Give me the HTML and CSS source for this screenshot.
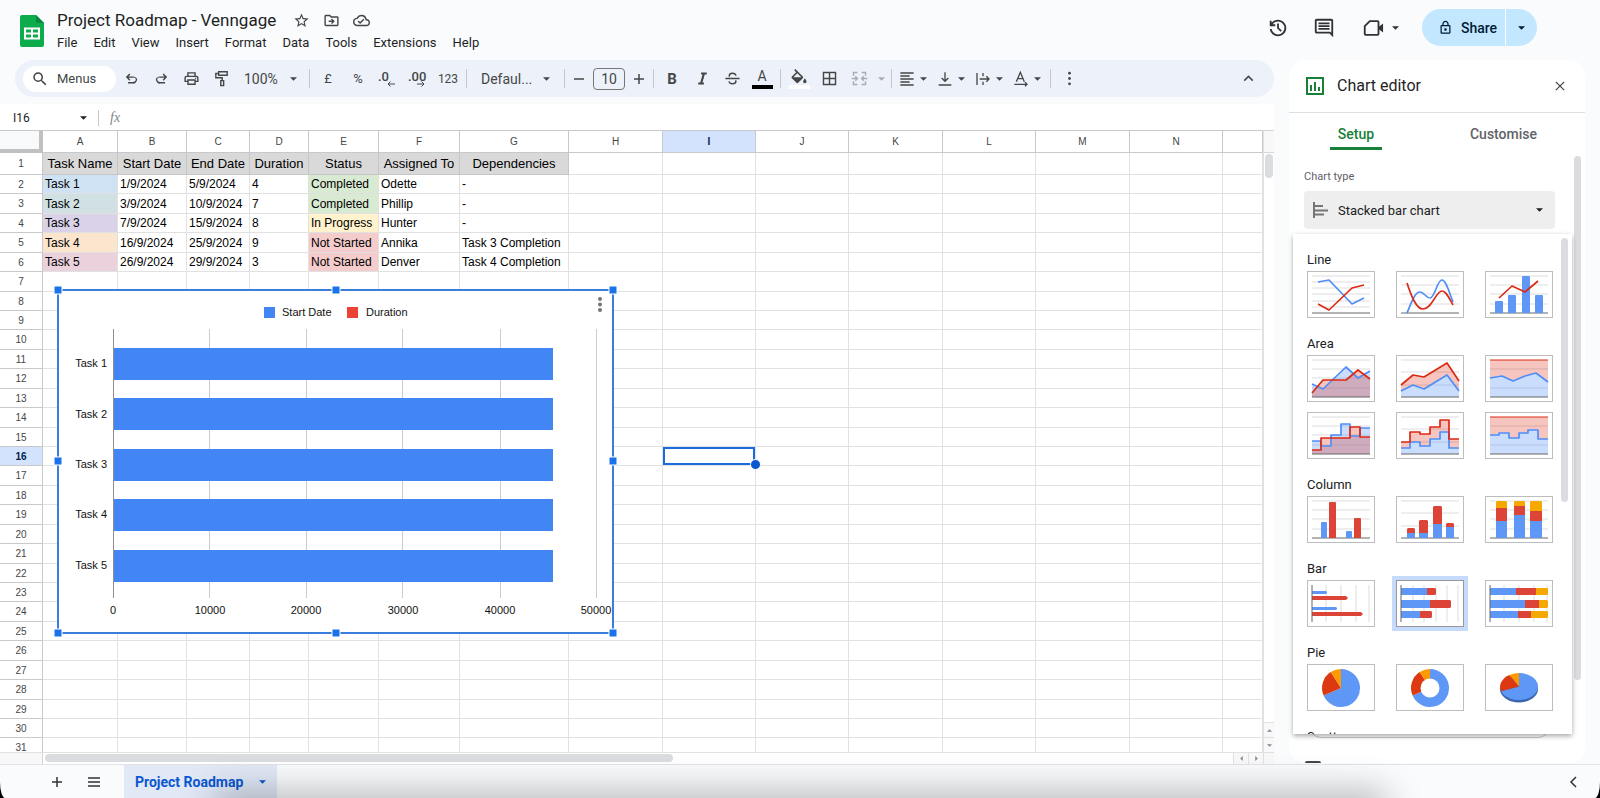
FILE: index.html
```html
<!DOCTYPE html>
<html lang="en">
<head>
<meta charset="utf-8">
<title>Project Roadmap - Venngage</title>
<link rel="stylesheet" href="styles.css">
</head>
<body>
<svg class="defs" aria-hidden="true">
  <symbol id="caret" viewBox="0 0 8 4"><path d="M0 0h8L4 4z"/></symbol>
  <symbol id="undo" viewBox="0 0 24 24"><path d="M7 19v-2h7.1q1.575 0 2.738-1T18 13.500t-1.163-2.500T14.100 11H7.800l2.600 2.600L9 15 4 10l5-5 1.400 1.400L7.800 9h6.300q2.425 0 4.163 1.575T20 13.500t-1.737 3.925T14.100 19z"/></symbol>
</svg>
<div class="app">
  <header class="top">
    <svg class="logo" viewBox="0 0 24 32"><path fill="#0cab4c" d="M2 0h14l8 8v22a2 2 0 0 1-2 2H2a2 2 0 0 1-2-2V2a2 2 0 0 1 2-2z"/><path fill="#078a3b" d="M16 0l8 8h-6a2 2 0 0 1-2-2z"/><path fill="#fff" fill-rule="evenodd" d="M4 12.500h16v12H4zM6 14.500v3h5v-3zm7 0v3h5v-3zm-7 5v3h5v-3zm7 0v3h5v-3z"/></svg>
    <div class="doc">
      <div class="title-row">
        <h1 class="title">Project Roadmap - Venngage</h1>
        <button class="mini" aria-label="Star"><svg viewBox="0 0 24 24"><path d="M22 9.240l-7.190-.62L12 2 9.190 8.630 2 9.240l5.460 4.730L5.820 21 12 17.270 18.180 21l-1.630-7.030L22 9.240zM12 15.400l-3.760 2.270 1-4.280-3.320-2.880 4.380-.38L12 6.100l1.710 4.040 4.380.38-3.320 2.880 1 4.280L12 15.400z"/></svg></button>
        <button class="mini" aria-label="Move"><svg viewBox="0 0 24 24"><path d="M20 6h-8l-2-2H4c-1.100 0-2 .9-2 2v12c0 1.100.9 2 2 2h16c1.100 0 2-.9 2-2V8c0-1.100-.9-2-2-2zm0 12H4V6h5.170l2 2H20v10zM8 12v2h4.840l-1.590 1.590L12.660 17l4-4-4-4-1.410 1.410L12.840 12z"/></svg></button>
        <button class="mini" aria-label="Saved to Drive"><svg viewBox="0 0 24 24"><path d="M19.350 10.040A7.490 7.490 0 0 0 12 4C9.110 4 6.600 5.640 5.350 8.040A5.994 5.994 0 0 0 0 14c0 3.310 2.690 6 6 6h13c2.760 0 5-2.240 5-5 0-2.640-2.050-4.780-4.650-4.960zM19 18H6c-2.210 0-4-1.790-4-4 0-2.050 1.530-3.760 3.560-3.970l1.070-.11.5-.95A5.469 5.469 0 0 1 12 6c2.620 0 4.880 1.860 5.390 4.430l.3 1.500 1.530.11A2.980 2.980 0 0 1 22 15c0 1.650-1.350 3-3 3zm-9-3.820l-2.090-2.090L6.500 13.500 10 17l6.010-6.010-1.410-1.410z"/></svg></button>
      </div>
      <nav class="menus">
        <button>File</button><button>Edit</button><button>View</button><button>Insert</button><button>Format</button><button>Data</button><button>Tools</button><button>Extensions</button><button>Help</button>
      </nav>
    </div>
    <div class="top-actions">
      <button class="action" aria-label="Version history"><svg viewBox="0 0 24 24"><path d="M12 21q-3.450 0-6.013-2.288T3.050 13H5.100q.35 2.600 2.313 4.300T12 19q2.925 0 4.963-2.037T19 12t-2.037-4.963T12 5q-1.725 0-3.225.8T6.250 8H9v2H3V4h2v2.350q1.275-1.600 3.113-2.475T12 3q1.875 0 3.513.713t2.850 1.924 1.925 2.850T21 12t-.712 3.513-1.925 2.850-2.850 1.925T12 21m2.800-4.800L11 12.400V7h2v4.600l3.200 3.200z"/></svg></button>
      <button class="action" aria-label="Comments"><svg viewBox="0 0 24 24"><path d="M21.990 4c0-1.100-.89-2-1.990-2H4c-1.100 0-2 .9-2 2v12c0 1.100.9 2 2 2h14l4 4-.01-18zM20 4v13.170L18.830 16H4V4h16zM6 12h12v2H6zm0-3h12v2H6zm0-3h12v2H6z"/></svg></button>
      <button class="action call" aria-label="Join a call"><svg viewBox="0 0 24 24"><path fill="none" stroke="currentColor" stroke-width="2" stroke-linejoin="round" d="M8.500 4.500H17a1 1 0 0 1 1 1v13a1 1 0 0 1-1 1H4a1 1 0 0 1-1-1V10z"/><path d="M18 11l5-4v10l-5-4z"/></svg><svg class="caret"><use href="#caret"/></svg></button>
      <div class="share">
        <button class="share-main"><svg viewBox="0 0 24 24"><path d="M18 8h-1V6c0-2.760-2.240-5-5-5S7 3.240 7 6v2H6c-1.100 0-2 .9-2 2v10c0 1.100.9 2 2 2h12c1.100 0 2-.9 2-2V10c0-1.100-.9-2-2-2zM9 6c0-1.660 1.340-3 3-3s3 1.340 3 3v2H9V6zm9 14H6V10h12v10zm-6-3c1.100 0 2-.9 2-2s-.9-2-2-2-2 .9-2 2 .9 2 2 2z"/></svg>Share</button>
        <button class="share-more" aria-label="Sharing options"><svg class="caret"><use href="#caret"/></svg></button>
      </div>
    </div>
  </header>

  <main class="main">
    <section class="work">
      <div class="toolbar" role="toolbar" aria-label="Formatting">
        <label class="search"><svg viewBox="0 0 24 24"><path d="M15.500 14h-.79l-.28-.27A6.471 6.471 0 0 0 16 9.500 6.500 6.500 0 1 0 9.500 16c1.610 0 3.090-.59 4.230-1.570l.27.28v.79l5 4.990L20.490 19l-4.990-5zm-6 0C7.010 14 5 11.990 5 9.500S7.010 5 9.500 5 14 7.010 14 9.500 11.990 14 9.500 14z"/></svg><input type="text" placeholder="Menus" aria-label="Search the menus"></label>
        <button class="tool" aria-label="Undo"><svg viewBox="0 0 24 24"><use href="#undo"/></svg></button>
        <button class="tool" aria-label="Redo"><svg class="flip" viewBox="0 0 24 24"><use href="#undo"/></svg></button>
        <button class="tool" aria-label="Print"><svg viewBox="0 0 24 24"><path d="M19 8h-1V3H6v5H5c-1.660 0-3 1.340-3 3v6h4v4h12v-4h4v-6c0-1.660-1.340-3-3-3zM8 5h8v3H8V5zm8 12v2H8v-4h8v2zm2-2v-2H6v2H4v-4c0-.55.45-1 1-1h14c.55 0 1 .45 1 1v4h-2z"/><circle cx="18" cy="11.500" r="1"/></svg></button>
        <button class="tool" aria-label="Paint format"><svg viewBox="0 0 24 24"><path class="line" d="M8 2.500h12v5H8zM8 5H4v6h9v4M11 15h4v7h-4z"/></svg></button>
        <span class="pick zoom"><select aria-label="Zoom"><option>100%</option></select><svg class="caret"><use href="#caret"/></svg></span>
        <span class="sep"></span>
        <button class="tool text">£</button>
        <button class="tool text">%</button>
        <button class="tool decimal" aria-label="Decrease decimal places"><span>.0</span><svg viewBox="0 0 8 6"><path d="M8 3H1M3.500.5L1 3l2.500 2.500"/></svg></button>
        <button class="tool decimal" aria-label="Increase decimal places"><span>.00</span><svg viewBox="0 0 8 6"><path d="M0 3h7M4.500.5L7 3 4.500 5.500"/></svg></button>
        <button class="tool text small">123</button>
        <span class="sep"></span>
        <span class="pick font"><select aria-label="Font"><option>Defaul...</option></select><svg class="caret"><use href="#caret"/></svg></span>
        <span class="sep"></span>
        <button class="step" aria-label="Decrease font size"><svg viewBox="0 0 12 12"><path d="M1 6h10"/></svg></button>
        <input class="size" type="text" value="10" aria-label="Font size">
        <button class="step" aria-label="Increase font size"><svg viewBox="0 0 12 12"><path d="M1 6h10M6 1v10"/></svg></button>
        <span class="sep"></span>
        <button class="tool bold">B</button>
        <button class="tool" aria-label="Italic"><svg viewBox="0 0 24 24"><path class="line heavy" d="M10 5h8M6 19h8M14 5l-4 14"/></svg></button>
        <button class="tool" aria-label="Strikethrough"><svg viewBox="0 0 24 24"><path class="line" d="M2 12h20M17 8c-.5-2-2.500-3.500-5-3.500S7.500 6 7.500 8c0 .6.100 1 .3 1.500M7 16c.5 2 2.500 3.500 5 3.500s4.800-1.500 4.800-3.500c0-.6-.2-1-.4-1.500"/></svg></button>
        <button class="tool swatch"><span>A</span><i class="ink"></i></button>
        <span class="sep"></span>
        <button class="tool swatch" aria-label="Fill colour"><svg viewBox="0 0 24 18"><path d="M16.560 8.940L7.620 0 6.210 1.410l2.380 2.380-5.150 5.150a1.490 1.490 0 0 0 0 2.120l5.500 5.500c.29.29.68.44 1.060.44s.77-.15 1.060-.44l5.500-5.500c.59-.58.59-1.530 0-2.120zM5.210 10L10 5.210 14.790 10H5.210zM19 11.500s-2 2.170-2 3.500c0 1.100.9 2 2 2s2-.9 2-2c0-1.330-2-3.500-2-3.500z"/></svg><i class="paper"></i></button>
        <button class="tool" aria-label="Borders"><svg viewBox="0 0 24 24"><path class="line" d="M3.500 3.500h17v17h-17zM12 3.500v17M3.500 12h17"/></svg></button>
        <button class="tool off" aria-label="Merge cells"><svg viewBox="0 0 24 24"><path class="line" d="M9 3.500H3.500V8M15 3.500h5.500V8M9 20.500H3.500V16M15 20.500h5.500V16M1 12h8M6 9l3 3-3 3M23 12h-8M18 9l-3 3 3 3"/></svg></button>
        <button class="tool-caret off" aria-label="Merge options"><svg class="caret"><use href="#caret"/></svg></button>
        <span class="sep"></span>
        <button class="tool-drop" aria-label="Horizontal align"><svg viewBox="0 0 24 24"><path class="line" d="M2 3h20M2 7.500h14M2 12h20M2 16.500h14M2 21h20"/></svg><svg class="caret"><use href="#caret"/></svg></button>
        <button class="tool-drop" aria-label="Vertical align"><svg viewBox="0 0 24 24"><path class="line" d="M2.500 21h19M12 2v13M7 10.500l5 5 5-5"/></svg><svg class="caret"><use href="#caret"/></svg></button>
        <button class="tool-drop" aria-label="Text wrapping"><svg viewBox="0 0 24 24"><path class="line" d="M3 3v18M12 3v5M12 16v5M7 12h14M17 8l4 4-4 4"/></svg><svg class="caret"><use href="#caret"/></svg></button>
        <button class="tool-drop" aria-label="Text rotation"><svg viewBox="0 0 24 24"><path class="line" d="M5 16l6-14 6 14M7.500 11.500h7M2 20h19M18 17l3 3-3 3"/></svg><svg class="caret"><use href="#caret"/></svg></button>
        <span class="sep"></span>
        <button class="tool" aria-label="More"><svg viewBox="0 0 24 24"><circle cx="12" cy="4.500" r="2"/><circle cx="12" cy="12" r="2"/><circle cx="12" cy="19.500" r="2"/></svg></button>
        <button class="tool collapse" aria-label="Hide the menus"><svg viewBox="0 0 24 24"><path class="line" d="M6 15l6-6 6 6"/></svg></button>
      </div>

      <div class="formula">
        <input class="name-box" type="text" value="I16" aria-label="Name box">
        <svg class="caret"><use href="#caret"/></svg>
        <label class="fx" for="fx">fx</label>
        <input class="fx-input" id="fx" type="text">
      </div>

      <div class="sheet">
        <div class="viewport">
          <table class="cells">
            <colgroup><col class="w43"><col class="w75"><col class="w69"><col class="w63"><col class="w59"><col class="w70"><col class="w81"><col class="w109"><col class="w94"><col class="w93"><col class="w93"><col class="w94"><col class="w93"><col class="w94"><col class="w93"><col></colgroup>
            <thead>
              <tr><td class="corner"></td><th>A</th><th>B</th><th>C</th><th>D</th><th>E</th><th>F</th><th>G</th><th>H</th><th class="current">I</th><th>J</th><th>K</th><th>L</th><th>M</th><th>N</th><th></th></tr>
            </thead>
            <tbody id="rows">
              <tr class="heads"><th>1</th><td>Task Name</td><td>Start Date</td><td>End Date</td><td>Duration</td><td>Status</td><td>Assigned To</td><td>Dependencies</td></tr>
              <tr><th>2</th><td class="blue">Task 1</td><td>1/9/2024</td><td>5/9/2024</td><td>4</td><td class="green">Completed</td><td>Odette</td><td>-</td></tr>
              <tr><th>3</th><td class="teal">Task 2</td><td>3/9/2024</td><td>10/9/2024</td><td>7</td><td class="green">Completed</td><td>Phillip</td><td>-</td></tr>
              <tr><th>4</th><td class="violet">Task 3</td><td>7/9/2024</td><td>15/9/2024</td><td>8</td><td class="yellow">In Progress</td><td>Hunter</td><td>-</td></tr>
              <tr><th>5</th><td class="orange">Task 4</td><td>16/9/2024</td><td>25/9/2024</td><td>9</td><td class="red">Not Started</td><td>Annika</td><td>Task 3 Completion</td></tr>
              <tr><th>6</th><td class="pink">Task 5</td><td>26/9/2024</td><td>29/9/2024</td><td>3</td><td class="red">Not Started</td><td>Denver</td><td>Task 4 Completion</td></tr>
            </tbody>
          </table>

          <svg class="chart" viewBox="0 0 568 356" role="img" aria-label="Stacked bar chart of start date and duration by task">
            <path fill="#fff" stroke="#3b7ddd" stroke-width="2" d="M6 6h555v343H6z"/>
            <g class="grid"><path d="M157.500 45v269M254.500 45v269M350.500 45v269M448.500 45v269M544.500 45v269"/></g>
            <path fill="#4285f4" d="M61 64h440v32H61zM61 114h440v32H61zM61 165h440v32H61zM61 215h440v32H61zM61 266h440v32H61z"/>
            <path stroke="#8f8f8f" d="M61.500 45v269"/>
            <rect x="212" y="23" width="11" height="11" fill="#4285f4"/><text x="230" y="32">Start Date</text>
            <rect x="295" y="23" width="11" height="11" fill="#ea4335"/><text x="314" y="32">Duration</text>
            <g text-anchor="end"><text x="55" y="83">Task 1</text><text x="55" y="134">Task 2</text><text x="55" y="184">Task 3</text><text x="55" y="234">Task 4</text><text x="55" y="285">Task 5</text></g>
            <g text-anchor="middle"><text x="61" y="330">0</text><text x="158" y="330">10000</text><text x="254" y="330">20000</text><text x="351" y="330">30000</text><text x="448" y="330">40000</text><text x="544" y="330">50000</text></g>
            <g fill="#757575"><circle cx="548" cy="15" r="2"/><circle cx="548" cy="20.500" r="2"/><circle cx="548" cy="26" r="2"/></g>
            <g class="handles"><rect x="2" y="2" width="8" height="8"/><rect x="280" y="2" width="8" height="8"/><rect x="557" y="2" width="8" height="8"/><rect x="2" y="173" width="8" height="8"/><rect x="557" y="173" width="8" height="8"/><rect x="2" y="345" width="8" height="8"/><rect x="280" y="345" width="8" height="8"/><rect x="557" y="345" width="8" height="8"/></g>
          </svg>
        </div>
        <div class="vbar"><span class="vcap"></span><span class="vthumb"></span><button aria-label="Scroll up"><svg class="caret tiny up"><use href="#caret"/></svg></button><button aria-label="Scroll down"><svg class="caret tiny"><use href="#caret"/></svg></button></div>
        <div class="hbar"><span class="hcap"></span><span class="hthumb"></span><button aria-label="Scroll left"><svg class="caret tiny left"><use href="#caret"/></svg></button><button aria-label="Scroll right"><svg class="caret tiny right"><use href="#caret"/></svg></button></div>
        <div class="bar-corner"></div>
      </div>
    </section>

    <aside class="panel">
      <div class="panel-head">
        <svg class="panel-icon" viewBox="0 0 18 18"><path fill="none" stroke="#188038" stroke-width="2" d="M1 1h16v16H1z"/><path fill="none" stroke="#188038" stroke-width="2" d="M5 8v6M9 5v9M13 10v4"/></svg>
        <h2>Chart editor</h2>
        <button class="close" aria-label="Close"><svg viewBox="0 0 12 12"><path d="M1 1l10 10M11 1L1 11"/></svg></button>
      </div>
      <div class="tabs" role="tablist"><button class="on" role="tab">Setup</button><button role="tab">Customise</button></div>
      <div class="fields">
        <label class="field-label" for="type">Chart type</label>
        <div class="type">
          <svg class="type-icon" viewBox="0 0 15 16"><path d="M1 0v16M2 4h8M2 8.500h13M2 12.500h9"/></svg>
          <select id="type"><option>Stacked bar chart</option></select>
          <svg class="caret"><use href="#caret"/></svg>

          <div class="gallery">
            <h3>Line</h3>
            <div class="thumbs">
              <button aria-label="Line chart"><svg viewBox="1 1 66 45"><path class="g" d="M5 5h58M5 11h58M5 17h58M5 23h58M5 30h58M5 36h58"/><path class="base" d="M5 42h58"/><path class="b" d="M11 11l11-2 23 24 12-6"/><path class="r" d="M11 33l11 6 23-22 12-3"/></svg></button>
              <button aria-label="Smooth line chart"><svg viewBox="1 1 66 45"><path class="g" d="M5 5h58M5 14h58M5 23h58M5 33h58"/><path class="base" d="M5 42h58"/><path class="b" d="M11 42C16 30 19 21 24 21c4 0 6 6 10 6 5 0 7-18 12-18 4 0 7 12 11 22"/><path class="r" d="M11 12c4 12 9 26 16 26 9 0 13-18 19-18 4 0 7 7 11 14"/></svg></button>
              <button aria-label="Combo chart"><svg viewBox="1 1 66 45"><path class="g" d="M5 5h58M5 14h58M5 23h58M5 33h58"/><path class="base" d="M5 42h58"/><path class="bf" d="M10 42V31q0-1 1-1h6q1 0 1 1v11zM23 42V25q0-1 1-1h6q1 0 1 1v17zM37 42V6q0-1 1-1h6q1 0 1 1v36zM50 42V25q0-1 1-1h6q1 0 1 1v17z"/><path class="r" d="M14 27l13-12 13 6 13-11"/></svg></button>
            </div>
            <h3>Area</h3>
            <div class="thumbs">
              <button aria-label="Area chart"><svg viewBox="1 1 66 45"><path class="g" d="M5 5h58M5 14h58M5 23h58M5 33h58"/><path class="ba" d="M5 29l11 5 23-22 12 11 12-7v26H5z"/><path class="ra" d="M5 38l11-13h23l12-10 12 9v18H5z"/><path class="base" d="M5 42h58"/><path class="b" d="M5 29l11 5 23-22 12 11 12-7"/><path class="r" d="M5 38l11-13h23l12-10 12 9"/></svg></button>
              <button aria-label="Stacked area chart"><svg viewBox="1 1 66 45"><path class="g" d="M5 5h58M5 17h58M5 30h58"/><path class="ba" d="M5 36l12-6 11 4 23-14 12 16v6H5z"/><path class="ra" d="M5 30l12-10 11 2L51 8l12 18v10L51 20 28 34l-11-4-12 6z"/><path class="base" d="M5 42h58"/><path class="b" d="M5 36l12-6 11 4 23-14 12 16"/><path class="r" d="M5 30l12-10 11 2L51 8l12 18"/></svg></button>
              <button aria-label="100% stacked area chart"><svg viewBox="1 1 66 45"><path class="g" d="M5 14h58M5 33h58"/><path class="ba" d="M5 23l12-2 11 5 12-5 11-3 12 9v15H5z"/><path class="ra" d="M5 5h58v22l-12-9-11 3-12 5-11-5-12 2z"/><path class="base" d="M5 42h58"/><path class="b" d="M5 23l12-2 11 5 12-5 11-3 12 9"/><path class="r thin" d="M5 5h58"/></svg></button>
              <button aria-label="Stepped area chart"><svg viewBox="1 1 66 45"><path class="g" d="M5 5h58M5 14h58M5 23h58M5 33h58"/><path class="ba" d="M5 29h9v5h10V23h10V12h9v12h10v-8h10v26H5z"/><path class="ra" d="M5 38h9V26h29V15h10v10h10v17H5z"/><path class="base" d="M5 42h58"/><path class="b" d="M5 29h9v5h10V23h10V12h9v12h10v-8h10"/><path class="r" d="M5 38h9V26h29V15h10v10h10"/></svg></button>
              <button aria-label="Stacked stepped area chart"><svg viewBox="1 1 66 45"><path class="g" d="M5 5h58M5 17h58M5 30h58"/><path class="ba" d="M5 36h9v-6h10v4h10v-7h10v-7h9v16h10v6H5z"/><path class="ra" d="M5 30h9V20h10v2h10v-7h10V8h9v19h10v9H53V20h-9v7H34v7H24v-4H14v6H5z"/><path class="base" d="M5 42h58"/><path class="b" d="M5 36h9v-6h10v4h10v-7h10v-7h9v16h10"/><path class="r" d="M5 30h9V20h10v2h10v-7h10V8h9v19h10"/></svg></button>
              <button aria-label="100% stacked stepped area chart"><svg viewBox="1 1 66 45"><path class="g" d="M5 14h58M5 33h58"/><path class="ba" d="M5 23h9v-2h10v5h10v-5h9v-3h10v9h10v15H5z"/><path class="ra" d="M5 5h58v22H53v-9H43v3h-9v5H24v-5H14v2H5z"/><path class="base" d="M5 42h58"/><path class="b" d="M5 23h9v-2h10v5h10v-5h9v-3h10v9h10"/><path class="r thin" d="M5 5h58"/></svg></button>
            </div>
            <h3>Column</h3>
            <div class="thumbs">
              <button aria-label="Column chart"><svg viewBox="1 1 66 45"><path class="g" d="M5 5h58M5 14h58M5 23h58M5 33h58"/><path class="base" d="M5 42h58"/><path class="bf" d="M14 42V27q0-1 1-1h4q1 0 1 1v15zM39 42v-6q0-1 1-1h4q1 0 1 1v6z"/><path class="rf" d="M22 42V7q0-1 1-1h5q1 0 1 1v35zM47 42V23q0-1 1-1h5q1 0 1 1v19z"/></svg></button>
              <button aria-label="Stacked column chart"><svg viewBox="1 1 66 45"><path class="g" d="M5 5h58M5 17h58M5 30h58"/><path class="base" d="M5 42h58"/><path class="rf" d="M11 37v-4l1-1h6l1 1v4zM23 37V25l1-1h7l1 1v12zM37 28V11l1-1h7l1 1v17zM50 31v-3l1-1h6l1 1v3z"/><path class="bf" d="M11 37h8v5h-8zM23 37h9v5h-9zM37 28h9v14h-9zM50 31h8v11h-8z"/></svg></button>
              <button aria-label="100% stacked column chart"><svg viewBox="1 1 66 45"><path class="g" d="M5 5h58M5 14h58M5 23h58M5 33h58"/><path class="base" d="M5 42h58"/><path class="yf" d="M11 12V6l1-1h9l1 1v6zM29 10V6l1-1h9l1 1v4zM45 15V6l1-1h10l1 1v9z"/><path class="rf" d="M11 12h11v13H11zM29 10h11v9H29zM45 15h12v10H45z"/><path class="bf" d="M11 25h11v17H11zM29 19h11v23H29zM45 25h12v17H45z"/></svg></button>
            </div>
            <h3>Bar</h3>
            <div class="thumbs">
              <button aria-label="Bar chart"><svg viewBox="1 1 66 45"><path class="g" d="M19 5v37M34 5v37M49 5v37M62 5v37"/><path class="bf" d="M5 11h14l1 1v1l-1 1H5zM5 27h24l1 1v1l-1 1H5z"/><path class="rf" d="M5 16h34l2 2-2 2H5zM5 32h49l2 2-2 2H5z"/><path class="base" d="M5 5v37"/></svg></button>
              <button class="chosen" aria-label="Stacked bar chart"><svg viewBox="1 1 66 45"><path class="g" d="M17 5v37M28 5v37M40 5v37M51 5v37M62 5v37"/><path class="bf" d="M5 8h26v7H5zM5 20h29v8H5zM5 31h19v7H5z"/><path class="rf" d="M31 8h8l1 1v5l-1 1h-8zM34 20h20l1 1v6l-1 1H34zM24 31h11l1 1v5l-1 1H24z"/><path class="base" d="M5 5v37"/></svg></button>
              <button aria-label="100% stacked bar chart"><svg viewBox="1 1 66 45"><path class="g" d="M19 5v37M34 5v37M49 5v37M62 5v37"/><path class="bf" d="M5 8h26v7H5zM5 20h35v8H5zM5 31h28v7H5z"/><path class="rf" d="M31 8h20v7H31zM40 20h14v8H40zM33 31h13v7H33z"/><path class="yf" d="M51 8h11l1 1v5l-1 1H51zM54 20h8l1 1v6l-1 1h-8zM46 31h16l1 1v5l-1 1H46z"/><path class="base" d="M5 5v37"/></svg></button>
            </div>
            <h3>Pie</h3>
            <div class="thumbs">
              <button aria-label="Pie chart"><svg viewBox="1 1 66 45"><path class="bf" d="M34 24V5a19 19 0 1 1-17.400 26.600z"/><path class="pr" d="M34 24l-17.400 7.600A19 19 0 0 1 23.700 8z"/><path class="po" d="M34 24L23.700 8A19 19 0 0 1 34 5z"/></svg></button>
              <button aria-label="Doughnut chart"><svg viewBox="1 1 66 45"><path class="bf" d="M34 24V5a19 19 0 1 1-17.400 26.600z"/><path class="pr" d="M34 24l-17.400 7.600A19 19 0 0 1 23.700 8z"/><path class="po" d="M34 24L23.700 8A19 19 0 0 1 34 5z"/><circle cx="34" cy="24" r="9.500" fill="#fff"/></svg></button>
              <button aria-label="3D pie chart"><svg viewBox="1 1 66 45"><ellipse cx="34" cy="25" rx="19" ry="13.500" fill="#3b67b0"/><path class="bf" d="M34 22.500V9a19 13.500 0 1 1-17.800 18.200z"/><path class="pr" d="M34 22.500l-17.800 4.700A19 13.500 0 0 1 24.500 11z"/><path class="po" d="M34 22.500L24.500 11A19 13.500 0 0 1 34 9z"/></svg></button>
            </div>
            <h3>Scatter</h3>
            <span class="gallery-thumb"></span>
          </div>
        </div>
        <div class="range"></div>
        <input class="tick" type="checkbox" aria-label="Switch rows / columns">
      </div>
      <span class="panel-thumb"></span>
    </aside>
  </main>

  <footer class="bottom">
    <button class="foot" aria-label="Add sheet"><svg viewBox="0 0 12 12"><path d="M1 6h10M6 1v10"/></svg></button>
    <button class="foot" aria-label="All sheets"><svg viewBox="0 0 12 12"><path d="M0 2h12M0 6h12M0 10h12"/></svg></button>
    <button class="sheet-tab">Project Roadmap<svg class="caret"><use href="#caret"/></svg></button>
    <button class="foot explore" aria-label="Show side panel"><svg viewBox="0 0 12 12"><path d="M8 1L3 6l5 5"/></svg></button>
  </footer>
</div>
<script src="rows.js"></script>
</body>
</html>
```
FILE: rows.js
```js
// Pads the sheet out to its full 15 columns and 31 rows, and marks the active cell.
const body = document.getElementById('rows');
const COLUMNS = 15;
const ROWS = 31;
const ACTIVE = { row: 16, column: 9 };

while (body.rows.length < ROWS) {
  const head = document.createElement('th');
  head.textContent = body.rows.length + 1;
  body.insertRow().append(head);
}

for (const row of body.rows) {
  while (row.cells.length <= COLUMNS) row.insertCell();
}

const activeRow = body.rows[ACTIVE.row - 1];
activeRow.cells[0].classList.add('current');
activeRow.cells[ACTIVE.column].classList.add('active');
```
FILE: styles.css
```css
* { box-sizing: border-box; }

html, body { height: 100%; }

body {
  margin: 0;
  background: #000;
  color: #1f1f1f;
  font-family: Roboto, "Liberation Sans", sans-serif;
  font-size: 13px;
  overflow: hidden;
}

button, input, select {
  font: inherit;
  color: inherit;
  margin: 0;
  padding: 0;
  border: 0;
  background: none;
  outline: none;
}

select { appearance: none; }
h1, h2, h3 { margin: 0; font-weight: 400; }
svg { display: block; fill: currentColor; }
.defs { position: absolute; width: 0; height: 0; }
.caret { width: 7px; height: 4px; flex: none; }

.app {
  position: relative;
  display: flex;
  flex-direction: column;
  height: 100%;
  background: #f9fbfd;
  border-radius: 0 0 5px 5px / 0 0 16px 16px;
  overflow: hidden;
}

/* Header */
.top {
  display: flex;
  height: 60px;
  padding: 0 63px 0 20px;
}
.logo { width: 24px; height: 32px; margin-top: 15px; }
.doc { margin-left: 13px; padding-top: 9px; }
.title-row { display: flex; align-items: center; height: 22px; }
.title { font-size: 17px; line-height: 22px; margin-right: 10px; color: #1f1f1f; }
.mini { display: flex; align-items: center; justify-content: center; width: 30px; height: 20px; color: #444746; }
.mini svg { width: 17px; height: 17px; }
.menus { display: flex; gap: 16px; margin-top: 1px; }
.menus button { height: 20px; font-size: 13px; }
.top-actions { display: flex; align-items: center; gap: 16px; height: 55px; margin-left: auto; color: #333; }
.action { display: flex; align-items: center; justify-content: center; width: 30px; height: 30px; }
.action svg { width: 22px; height: 22px; }
.action.call { width: 51px; gap: 8px; }
.action .caret { width: 7px; height: 4px; }
.share { display: flex; gap: 1px; color: #001d35; }
.share button { display: flex; align-items: center; height: 37px; background: #c2e7ff; }
.share-main { width: 83px; padding-left: 16px; gap: 8px; border-radius: 19px 0 0 19px; font-size: 14px; font-weight: 500; }
.share-main svg { width: 15px; height: 15px; }
.share-more { width: 31px; justify-content: center; border-radius: 0 19px 19px 0; }

.main { display: flex; flex: 1; min-height: 0; }
.work { display: flex; flex-direction: column; flex: 1; min-width: 0; }

/* Toolbar */
.toolbar {
  display: flex;
  align-items: center;
  height: 37px;
  margin: 0 0 7px 15px;
  padding: 0 11px 0 8px;
  border-radius: 19px;
  background: #edf2fa;
  color: #444746;
  flex: none;
}
.toolbar button { flex: none; }
.search { display: flex; align-items: center; gap: 8px; width: 93px; height: 26px; padding-left: 8px; border-radius: 13px; background: #fff; flex: none; }
.search svg { width: 18px; height: 18px; }
.search input { width: 56px; }
.search input::placeholder { color: #444746; opacity: 1; }
.tool { display: flex; align-items: center; justify-content: center; width: 30px; height: 28px; }
.tool svg { width: 17px; height: 17px; }
.flip { transform: scaleX(-1); }
.line { fill: none; stroke: currentColor; stroke-width: 2; }
.heavy { stroke-width: 3; }
.off { opacity: .4; }
.text { font-size: 13px; }
.small { font-size: 12px; }
.decimal { flex-direction: column; align-items: flex-start; padding-left: 5px; font-size: 13px; line-height: 13px; font-weight: 500; }
.decimal svg { width: 8px; height: 6px; margin: -2px 0 0 9px; fill: none; stroke: currentColor; }
.sep { width: 1px; height: 19px; margin: 0 3px; background: #c7c7c7; flex: none; }
.pick { display: flex; align-items: center; flex: none; }
.zoom { width: 70px; padding: 0 9px 0 8px; font-size: 14px; }
.font { width: 91px; padding: 0 11px; font-size: 14px; }
.pick select { flex: 1; min-width: 0; }
.step { display: flex; align-items: center; justify-content: center; width: 22px; height: 28px; }
.step svg, .foot svg { width: 12px; height: 12px; fill: none; stroke: currentColor; stroke-width: 1.5; }
.size { width: 32px; height: 22px; margin: 0 3px; border: 1px solid #747775; border-radius: 4px; text-align: center; font-size: 14px; flex: none; }
.bold { font-size: 15px; font-weight: 700; }
.swatch { flex-direction: column; font-size: 14px; line-height: 15px; }
.swatch svg { width: 20px; height: 15px; }
.swatch i { width: 21px; height: 4px; margin-top: 1px; }
.ink { background: #000; }
.paper { background: #fff; }
.tool-caret { width: 14px; display: flex; justify-content: center; }
.tool-drop { display: flex; align-items: center; width: 38px; height: 28px; gap: 5px; padding-left: 4px; }
.tool-drop svg { width: 16px; height: 16px; }
.tool-drop .caret { width: 7px; height: 4px; }
.collapse { margin-left: auto; }

/* Formula bar */
.formula { display: flex; align-items: center; height: 26px; padding: 2px 0 0 13px; background: #fff; flex: none; }
.name-box { width: 66px; font-size: 12px; margin-right: 1px; }
.fx { margin-left: 11px; padding-left: 11px; border-left: 1px solid #c7c7c7; font: italic 14px/16px "Liberation Serif", serif; color: #80868b; }
.fx-input { flex: 1; margin-left: 10px; }

/* Sheet */
.sheet {
  display: grid;
  grid-template: minmax(0, 1fr) 12px / minmax(0, 1fr) 11px;
  flex: 1;
  min-height: 0;
  background: #fff;
}
.viewport { position: relative; overflow: hidden; }
.cells { width: 100%; table-layout: fixed; border-spacing: 0; font-family: "Liberation Sans", Arial, sans-serif; font-size: 12px; color: #000; }
.w43 { width: 43px; } .w59 { width: 59px; } .w63 { width: 63px; } .w69 { width: 69px; } .w70 { width: 70px; }
.w75 { width: 75px; } .w81 { width: 81px; } .w93 { width: 93px; } .w94 { width: 94px; } .w109 { width: 109px; }
.cells th, .cells td {
  height: 19px;
  padding: 1px 0 0 2px;
  border: solid #e1e1e1;
  border-width: 0 1px 1px 0;
  text-align: left;
  line-height: 15px;
  white-space: nowrap;
}
.cells th { padding: 0; border-color: #c7c9cb; color: #444746; font-size: 10px; font-weight: 400; text-align: center; }
.cells thead th, .cells thead td { height: 23px; border-top: 1px solid #c7c9cb; }
.cells thead .corner { background: #f8f9fa; border-right: 4px solid #c0c0c0; border-bottom: 4px solid #c0c0c0; }
.cells tbody tr:nth-child(7n+3) > *, .cells tbody tr:nth-child(7n+5) > *, .cells tbody tr:nth-child(7n) > * { height: 20px; }
.cells tbody .heads > * { height: 22px; }
.cells .heads td { padding: 0; font-size: 13px; text-align: center; }
.cells .heads td:nth-child(-n+8) { background: #d9d9d9; border-color: #c6c6c6; }
.cells .current { background: #d3e3fd; color: #041e49; font-weight: 700; }
.blue { background: #cfe2f3; } .teal { background: #d0e0e3; } .violet { background: #d9d2e9; }
.orange { background: #fce5cd; } .pink { background: #ead1dc; } .green { background: #d9ead3; }
.yellow { background: #fff2cc; } .red { background: #f4cccc; }
.active { position: relative; box-shadow: inset 0 0 0 2px #1b6ae0; }
.active::after { content: ""; position: absolute; right: -6px; bottom: -5px; width: 9px; height: 9px; border: 1px solid #fff; border-radius: 50%; background: #0b57d0; z-index: 1; }

.chart { position: absolute; left: 52px; top: 154px; width: 568px; height: 356px; font: 11px "Liberation Sans", Arial, sans-serif; }
.chart text { fill: #111; }
.grid { stroke: #ccc; }
.handles { fill: #1a73e8; stroke: #fff; }

/* Sheet scroll bars */
.vbar { display: flex; flex-direction: column; border-left: 1px solid #e1e1e1; }
.vcap { height: 23px; background: #f8f8f8; border: solid #d5d5d5; border-width: 1px 0; }
.vthumb { width: 8px; height: 24px; margin: 1px 1px auto; border-radius: 4px; background: #dadce0; }
.vbar button, .hbar button { display: flex; align-items: center; justify-content: center; background: #f8f8f8; color: #80868b; }
.vbar button { height: 15px; border-top: 1px solid #e1e1e1; }
.caret.tiny { width: 5px; height: 3px; }
.up { transform: rotate(180deg); }
.left { transform: rotate(90deg); }
.right { transform: rotate(-90deg); }
.hbar { display: flex; border-top: 1px solid #e1e1e1; }
.hcap { width: 43px; background: #f8f8f8; border-right: 1px solid #d5d5d5; }
.hthumb { width: 50%; max-width: 628px; height: 8px; margin: 1px auto 0 2px; border-radius: 4px; background: #dadce0; }
.hbar button { width: 15px; border-left: 1px solid #e1e1e1; }
.bar-corner { background: #f8f8f8; border: solid #e1e1e1; border-width: 1px 0 0 1px; }

/* Chart editor */
.panel { position: relative; display: flex; flex-direction: column; width: 296px; margin: 0 15px 1px; border-radius: 16px; background: #fff; flex: none; }
.panel-head { display: flex; align-items: center; height: 53px; padding: 0 20px 0 17px; border-bottom: 1px solid #dedfe1; flex: none; }
.panel-icon { width: 18px; height: 18px; }
.panel-head h2 { margin: 0 auto 0 13px; font-size: 16px; line-height: 20px; }
.close svg { width: 10px; height: 10px; fill: none; stroke: #444; stroke-width: 1.5; }
.tabs { display: flex; justify-content: space-between; height: 37px; padding: 0 48px 0 41px; color: #5f6368; font-size: 14px; font-weight: 500; flex: none; }
.tabs button { padding-top: 8px; border-bottom: 3px solid transparent; }
.tabs .on { width: 52px; color: #188038; border-color: #188038; border-radius: 2px 2px 0 0; }
.fields { display: flex; flex-direction: column; flex: 1; min-height: 0; padding: 19px 30px 0 15px; }
.field-label { margin-bottom: 6px; color: #5f6368; font-size: 11px; line-height: 16px; }
.type { position: relative; display: flex; align-items: center; height: 38px; padding: 0 12px 0 9px; border-radius: 4px; background: #eee; color: #202124; flex: none; }
.type select { flex: 1; margin-left: 10px; font-size: 13px; }
.type-icon { width: 15px; height: 16px; fill: none; stroke: #757575; stroke-width: 2; }
.gallery {
  position: absolute;
  left: -11px;
  right: -17px;
  top: 43px;
  height: 500px;
  padding: 18px 15px 0 14px;
  overflow: hidden;
  background: #fff;
  box-shadow: 0 2px 5px rgba(0, 0, 0, .35);
  z-index: 2;
}
.gallery h3 { margin-bottom: 3px; font-size: 13px; line-height: 16px; }
.thumbs { display: grid; grid-template-columns: repeat(3, 68px); gap: 10px 21px; margin-bottom: 18px; }
.thumbs button { height: 47px; border: 1px solid #bdbdbd; }
.thumbs svg { width: 100%; height: 100%; }
.thumbs .chosen { outline: 4px solid #c6dafc; border-color: #999; }
.g, .base, .b, .r { fill: none; }
.g { stroke: #ddd; }
.base { stroke: #666; }
.b { stroke: #4f8ef7; stroke-width: 1.7; stroke-linejoin: round; }
.r { stroke: #dc2a13; stroke-width: 1.7; stroke-linejoin: round; }
.thin { stroke-width: 1; }
.ba { fill: #4f8ef7; fill-opacity: .3; }
.ra { fill: #dc2a13; fill-opacity: .27; }
.bf { fill: #5e97f6; }
.rf { fill: #db4437; }
.yf { fill: #f4a800; }
.pr { fill: #dc3912; }
.po { fill: #ff9900; }
.gallery-thumb { position: absolute; right: 4px; top: 4px; width: 7px; height: 264px; border-radius: 4px; background: #dadce0; }
.range { height: 40px; border: 1px solid #c7c7c7; border-radius: 12px; margin: auto 5px 23px; flex: none; }
.tick { appearance: none; width: 16px; height: 2px; margin-left: 1px; border-radius: 2px 2px 0 0; background: #444746; flex: none; }
.panel-thumb { position: absolute; right: 4px; top: 96px; width: 7px; height: 524px; border-radius: 4px; background: #dadce0; }

/* Sheet tabs */
.bottom { position: relative; display: flex; align-items: center; height: 34px; padding: 0 8px 0 38px; border-top: 1px solid #e1e3e6; color: #333; flex: none; }
.bottom::after { content: ""; position: absolute; left: 220px; right: 220px; top: 34px; height: 20px; box-shadow: 0 0 36px 6px rgba(0, 0, 0, .3); pointer-events: none; }
.foot { display: flex; align-items: center; justify-content: center; width: 37px; height: 30px; }
.sheet-tab { display: flex; align-items: center; justify-content: space-between; align-self: stretch; width: 153px; margin-left: 12px; padding: 0 11px 0 11px; background: #e1e9f7; color: #0b57d0; font-size: 14px; font-weight: 700; }
.explore { width: 36px; margin-left: auto; }
```
